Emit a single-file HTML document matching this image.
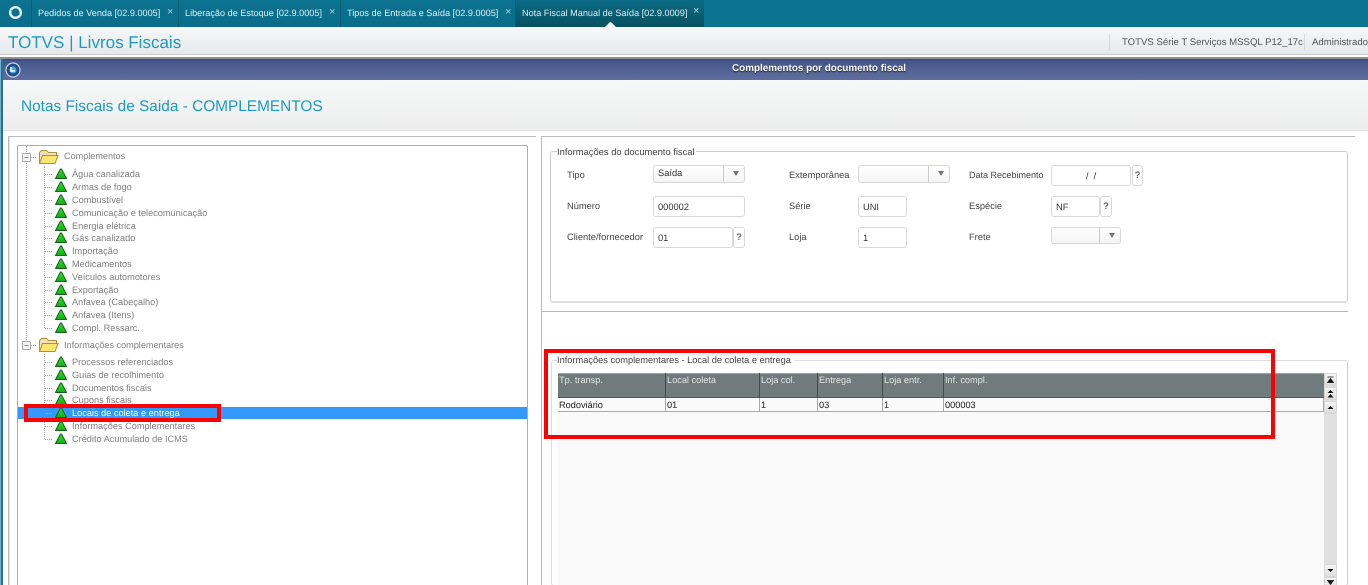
<!DOCTYPE html>
<html lang="pt-BR"><head><meta charset="utf-8"><title>Complementos por documento fiscal</title>
<style>
html,body{margin:0;padding:0;overflow:hidden;width:1368px;height:585px}
body{position:relative;background:#fff;font-family:"Liberation Sans",sans-serif;font-size:9.2px;color:#333;text-rendering:geometricPrecision}
div,span,svg{position:absolute;box-sizing:border-box}
#w{left:0;top:0;width:1368px;height:585px;overflow:hidden;background:#fff}
#p{left:0;top:0;width:1368px;height:585px;overflow:hidden;filter:blur(.3px)}
.t{white-space:nowrap;line-height:12px}
.tab{top:0;height:27px;background:linear-gradient(#0b7290,#0a6d8a);border-right:1px solid #0a5d76;color:#dfeef2;font-size:9.15px;line-height:26px;padding-left:6px;white-space:nowrap}
.x{top:0;color:#a9cdd8;font-size:11px;line-height:25px}
.n{left:72px;color:#808080;font-size:9.2px;line-height:12px;white-space:nowrap}
.f{left:64px;color:#808080;font-size:9.1px;line-height:12px;white-space:nowrap}
.l{color:#444;font-size:9.3px;line-height:12px;white-space:nowrap}
.i{background:#fff;border:1px solid #d8d8d8;border-radius:3px;color:#333;font-size:9.3px;line-height:20px;padding-left:4px;white-space:nowrap}
.s{background:linear-gradient(#fff,#f4f4f4);border:1px solid #d8d8d8;border-radius:3px;color:#333;font-size:9.3px;line-height:14px;padding-left:4px}
.s i{position:absolute;right:0;top:0;bottom:0;width:20px;border-left:1px solid #ccc}
.s b{position:absolute;right:5px;top:5px;width:0;height:0;border:3px solid transparent;border-top:5px solid #6b7680;border-bottom:0}
.q{background:#fff;border:1px solid #d8d8d8;border-radius:3px;font-size:9.5px;font-weight:bold;color:#666;text-align:center;line-height:19px}
.gh{top:373px;height:25px;color:#dfe4e4;font-size:9.2px;line-height:15px;padding-left:1px;border-right:1px solid #3f4a4c;white-space:nowrap}
.gc{top:398px;height:14px;color:#222;font-size:9.2px;line-height:14px;padding-left:1px;border-right:1px solid #aaa;white-space:nowrap}
.sb{left:1324px;width:13px;height:13px;background:linear-gradient(#f6f6f6,#ddd);border:1px solid #d6d6d6;border-radius:2px}
.red{border:4px solid #f00}
</style></head><body><div id="w"><div id="p">

<!-- top bar -->
<div style="left:0;top:0;width:1368px;height:28px;background:#0b7290;border-bottom:1px solid #0a5f78"></div>
<div class="tab" style="left:0;width:32px;padding:0"></div>
<svg style="left:8px;top:5px" width="16" height="16" viewBox="0 0 16 16"><circle cx="7.500" cy="7.500" r="5.300" fill="none" stroke="#e8f2f5" stroke-width="2.400"/><path d="M3.500 5.500L11.500 9.500" stroke="#0b7290" stroke-width="1.800"/></svg>
<div class="tab" style="left:32px;width:147px">Pedidos de Venda [02.9.0005]</div><div class="x" style="left:167px">×</div>
<div class="tab" style="left:179px;width:162px">Liberação de Estoque [02.9.0005]</div><div class="x" style="left:329px">×</div>
<div class="tab" style="left:341px;width:175px">Tipos de Entrada e Saída [02.9.0005]</div><div class="x" style="left:505px">×</div>
<div class="tab" style="left:516px;width:188px;background:linear-gradient(#0a6b86,#07505f);border:0">Nota Fiscal Manual de Saída [02.9.0009]</div><div class="x" style="left:693px;top:-1px;color:#b9d6de">×</div>

<!-- header -->
<div style="left:0;top:28px;width:1368px;height:27px;background:linear-gradient(#f6f7f8,#e6e8eb);border-bottom:1px solid #c9cbcc"></div>
<div style="left:0;top:27px;width:1368px;height:1px;background:#fff"></div>
<svg style="left:604px;top:21px" width="14" height="7"><path d="M0 7L6 1L7 1L13 7Z" fill="#f5f6f7"/></svg>
<div class="t" style="left:8px;top:32px;font-size:17px;line-height:21px;color:#1c9bc3">TOTVS | Livros Fiscais</div>
<div style="left:1109px;top:34px;width:1px;height:16px;background:#d8dadc"></div>
<div style="left:1304px;top:34px;width:1px;height:16px;background:#d8dadc"></div>
<div class="t" style="left:1122px;top:37px;color:#555;font-size:9.6px">TOTVS Série T Serviços MSSQL P12_17c</div>
<div class="t" style="left:1312px;top:37px;color:#555;font-size:9.6px">Administrador</div>

<!-- window -->
<div style="left:0;top:55px;width:1368px;height:530px;background:#fff"></div>
<div style="left:0;top:58px;width:1px;height:527px;background:#6fb0cf"></div>
<div style="left:1px;top:58px;width:2px;height:527px;background:#2f6d8f"></div>
<div style="left:3px;top:59px;width:1365px;height:21px;background:linear-gradient(#43548b,#606f9e);border-top:1px solid #3b4a7c"></div>
<div style="left:0;top:57px;width:1368px;height:2px;background:#8d8f92"></div>
<svg style="left:5px;top:62px" width="16" height="16" viewBox="0 0 16 16"><circle cx="8" cy="8" r="7" fill="#1d4f86" stroke="#c9d3e2" stroke-width="1.200"/><circle cx="8" cy="8" r="3.600" fill="#4fa3dc"/><path d="M6 5v4h4" stroke="#fff" stroke-width="1.400" fill="none"/></svg>
<div class="t" style="left:0;top:63px;width:1638px;text-align:center;color:#fff;font-weight:bold;font-size:9.9px;text-shadow:0 1px 1px #222">Complementos por documento fiscal</div>
<div style="left:3px;top:80px;width:1365px;height:51px;background:linear-gradient(#f6f8f7,#ededee);border-bottom:1px solid #e0e0e0"></div>
<div class="t" style="left:21px;top:98px;font-size:15.4px;line-height:18px;color:#1c9bc3">Notas Fiscais de Saida - COMPLEMENTOS</div>

<!-- left panel -->
<div style="left:8px;top:136px;width:528px;height:1px;background:#bbb"></div>
<div style="left:8px;top:136px;width:1px;height:449px;background:#bbb"></div>
<div style="left:9px;top:137px;width:1px;height:448px;background:#e2e2e2"></div>
<div style="left:17px;top:145px;width:511px;height:440px;border:1px solid #8fb0ea;border-bottom:0;border-radius:2px 2px 0 0;background:#fff"></div>

<!-- tree guides -->
<div style="left:26px;top:146px;width:1px;height:198px;border-left:1px dotted #aaa"></div>
<div style="left:44px;top:166px;width:1px;height:162px;border-left:1px dotted #aaa"></div>
<div style="left:44px;top:354px;width:1px;height:85px;border-left:1px dotted #aaa"></div>
<div style="left:30px;top:157px;width:6px;border-top:1px dotted #aaa"></div>
<div style="left:30px;top:345px;width:6px;border-top:1px dotted #aaa"></div>

<!-- folders -->
<svg style="left:22px;top:149px" width="38" height="16" viewBox="0 0 38 16"><rect x=".5" y="4.500" width="8" height="8" rx="1" fill="#f3f3f3" stroke="#aaa"/><path d="M2.500 8.500h4" stroke="#888"/><path d="M17.500 14.500V3.500l2-2h5l2 2h8v3" fill="#efe2b6" stroke="#b08f3e"/><path d="M17.500 14.500l3-8h15.500l-3 8z" fill="#fde56f" stroke="#b08f3e"/></svg>
<svg style="left:22px;top:337px" width="38" height="16" viewBox="0 0 38 16"><rect x=".5" y="4.500" width="8" height="8" rx="1" fill="#f3f3f3" stroke="#aaa"/><path d="M2.500 8.500h4" stroke="#888"/><path d="M17.500 14.500V3.500l2-2h5l2 2h8v3" fill="#efe2b6" stroke="#b08f3e"/><path d="M17.500 14.500l3-8h15.500l-3 8z" fill="#fde56f" stroke="#b08f3e"/></svg>
<div class="f" style="top:150px">Complementos</div>
<div class="f" style="top:339px">Informações complementares</div>

<!-- selected row -->
<div style="left:18px;top:407px;width:509px;height:12px;background:#3399ff"></div>

<!-- tree icons -->
<svg style="left:45px;top:166px" width="24" height="280" viewBox="0 0 24 280">
<defs><linearGradient id="g" x1="0" y1="0" x2="0" y2="1"><stop offset="0" stop-color="#3add3a"/><stop offset="1" stop-color="#0cb00c"/></linearGradient>
<g id="a"><path d="M0 7.500h8" stroke="#aaa" stroke-dasharray="1 1"/><path d="M10.500 11.500L15.500 2h1L21.500 11.500z" fill="url(#g)" stroke="#14611a" stroke-linejoin="round"/></g></defs>
<use href="#a" y="1"/><use href="#a" y="14"/><use href="#a" y="27"/><use href="#a" y="40"/><use href="#a" y="53"/><use href="#a" y="65"/><use href="#a" y="78"/><use href="#a" y="91"/><use href="#a" y="104"/><use href="#a" y="117"/><use href="#a" y="129"/><use href="#a" y="142"/><use href="#a" y="155"/>
<use href="#a" y="189"/><use href="#a" y="202"/><use href="#a" y="215"/><use href="#a" y="227"/><use href="#a" y="240"/><use href="#a" y="253"/><use href="#a" y="266"/>
</svg>

<!-- tree labels -->
<div class="n" style="top:168px">Água canalizada</div>
<div class="n" style="top:181px">Armas de fogo</div>
<div class="n" style="top:194px">Combustível</div>
<div class="n" style="top:207px">Comunicação e telecomunicação</div>
<div class="n" style="top:220px">Energia elétrica</div>
<div class="n" style="top:232px">Gás canalizado</div>
<div class="n" style="top:245px">Importação</div>
<div class="n" style="top:258px">Medicamentos</div>
<div class="n" style="top:271px">Veículos automotores</div>
<div class="n" style="top:284px">Exportação</div>
<div class="n" style="top:296px">Anfavea (Cabeçalho)</div>
<div class="n" style="top:309px">Anfavea (Itens)</div>
<div class="n" style="top:322px">Compl. Ressarc.</div>
<div class="n" style="top:356px">Processos referenciados</div>
<div class="n" style="top:369px">Guias de recolhimento</div>
<div class="n" style="top:382px">Documentos fiscais</div>
<div class="n" style="top:394px">Cupons fiscais</div>
<div class="n" style="top:407px;color:#fff">Locais de coleta e entrega</div>
<div class="n" style="top:420px">Informações Complementares</div>
<div class="n" style="top:433px">Crédito Acumulado de ICMS</div>

<!-- right panel -->
<div style="left:541px;top:136px;width:814px;height:1px;background:#bbb"></div>
<div style="left:541px;top:136px;width:1px;height:449px;background:#bbb"></div>
<div style="left:541px;top:311px;width:807px;height:1px;background:#b5b5b5"></div>

<!-- doc group -->
<div style="left:550px;top:151px;width:798px;height:152px;border:1px solid #ccc;border-bottom:2px solid #e0e0e0;border-radius:3px"></div>
<div class="t" style="left:557px;top:146px;background:#fff;padding-right:1px;color:#444;font-size:9.4px">Informações do documento fiscal</div>

<div class="l" style="left:567px;top:169px">Tipo</div>
<div class="s" style="left:653px;top:165px;width:92px;height:18px;line-height:15px">Saída<i></i><b></b></div>
<div class="l" style="left:789px;top:169px">Extemporânea</div>
<div class="s" style="left:858px;top:165px;width:92px;height:18px"><i></i><b></b></div>
<div class="l" style="left:969px;top:169px;font-size:9px">Data Recebimento</div>
<div class="i" style="left:1051px;top:165px;width:80px;height:21px;padding:0;text-align:center">/ &nbsp;/</div>
<div class="q" style="left:1132px;top:165px;width:11px;height:21px">?</div>

<div class="l" style="left:567px;top:200px">Número</div>
<div class="i" style="left:653px;top:196px;width:92px;height:21px">000002</div>
<div class="l" style="left:789px;top:200px">Série</div>
<div class="i" style="left:858px;top:196px;width:49px;height:21px">UNI</div>
<div class="l" style="left:969px;top:200px">Espécie</div>
<div class="i" style="left:1051px;top:196px;width:49px;height:21px">NF</div>
<div class="q" style="left:1100px;top:196px;width:12px;height:21px">?</div>

<div class="l" style="left:567px;top:231px">Cliente/fornecedor</div>
<div class="i" style="left:653px;top:227px;width:80px;height:21px">01</div>
<div class="q" style="left:733px;top:227px;width:12px;height:21px">?</div>
<div class="l" style="left:789px;top:231px">Loja</div>
<div class="i" style="left:858px;top:227px;width:49px;height:21px">1</div>
<div class="l" style="left:969px;top:231px">Frete</div>
<div class="s" style="left:1051px;top:227px;width:70px;height:17px"><i></i><b></b></div>

<!-- complement group -->
<div style="left:551px;top:360px;width:797px;height:226px;border:1px solid #ddd;border-right:1px solid #ccc;border-radius:3px"></div>
<div class="t" style="left:557px;top:354px;background:#fff;padding-right:4px;color:#444;font-size:9.25px;line-height:13px">Informações complementares - Local de coleta e entrega</div>

<div style="left:558px;top:397px;width:766px;height:188px;background:#f9f9f9"></div>
<div style="left:558px;top:373px;width:766px;height:25px;background:#6f7b7d;border-top:1px solid #9aa2a3;border-bottom:1px solid #4d5759"></div>
<div style="left:558px;top:398px;width:766px;height:14px;background:#fafafa;border-bottom:1px solid #aaa;border-right:1px solid #aaa"></div>

<div class="gh" style="left:558px;width:108px">Tp. transp.</div>
<div class="gh" style="left:666px;width:94px">Local coleta</div>
<div class="gh" style="left:760px;width:58px">Loja col.</div>
<div class="gh" style="left:818px;width:65px">Entrega</div>
<div class="gh" style="left:883px;width:61px">Loja entr.</div>
<div class="gh" style="left:944px;width:380px;border-right:0">Inf. compl.</div>

<div class="gc" style="left:558px;width:108px">Rodoviário</div>
<div class="gc" style="left:666px;width:94px">01</div>
<div class="gc" style="left:760px;width:58px">1</div>
<div class="gc" style="left:818px;width:65px">03</div>
<div class="gc" style="left:883px;width:61px">1</div>
<div class="gc" style="left:944px;width:380px;border-right:0">000003</div>

<!-- scrollbar -->
<div style="left:1324px;top:373px;width:13px;height:212px;background:#e0e0e0"></div>
<div class="sb" style="top:373px"><svg style="left:1px;top:1px" width="9" height="9" viewBox="0 0 9 9"><path d="M1.500 2h6M1.500 7.500h6L4.500 3.500z" stroke="#111" stroke-width=".7" fill="#111"/></svg></div>
<div class="sb" style="top:387px"><svg style="left:1px;top:1px" width="9" height="9" viewBox="0 0 9 9"><path d="M1.500 4h6L4.500 1zM1.500 8.500h6L4.500 5z" fill="#111"/></svg></div>
<div class="sb" style="top:401px"><svg style="left:1px;top:1px" width="9" height="9" viewBox="0 0 9 9"><path d="M1.500 6h6L4.500 3z" fill="#111"/></svg></div>
<div class="sb" style="top:564px"><svg style="left:1px;top:1px" width="9" height="9" viewBox="0 0 9 9"><path d="M1.500 3h6L4.500 6z" fill="#111"/></svg></div>
<div class="sb" style="top:577px"><svg style="left:1px;top:1px" width="9" height="9" viewBox="0 0 9 9"><path d="M1.500 1.500h6L4.500 5.500zM1.500 7h6" stroke="#111" stroke-width=".7" fill="#111"/></svg></div>

</div>
<!-- red boxes -->
<div class="red" style="left:24px;top:404px;width:197px;height:18px"></div>
<div class="red" style="left:544px;top:349px;width:731px;height:90px"></div>
</div></body></html>
